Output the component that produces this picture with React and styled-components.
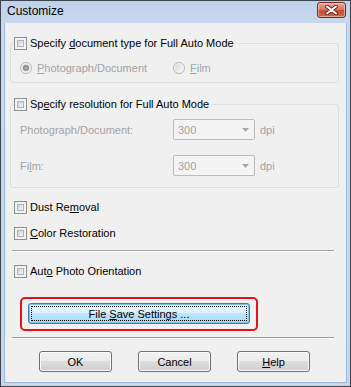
import styled, { createGlobalStyle } from "styled-components";

const GlobalStyle = createGlobalStyle`
  html, body {
    margin: 0;
    padding: 0;
    background: #ffffff;
  }
  body {
    font-family: "Liberation Sans", Arial, sans-serif;
    font-size: 11px;
    color: #000;
  }
`;

const Window = styled.div`
  width: 351px;
  height: 387px;
  box-sizing: border-box;
  border: 1px solid #3d4650;
  background: linear-gradient(#bfd1ea, #cbdaee 30px, #c6d7ec);
  display: flex;
  flex-direction: column;
`;

const TitleBar = styled.div`
  height: 22px;
  display: flex;
  align-items: center;
  justify-content: space-between;
  padding: 0 4px 0 6px;
  flex-shrink: 0;
`;

const Title = styled.span`
  font-size: 12px;
  color: #000;
  padding-bottom: 3px;
`;

const CloseButton = styled.div`
  width: 27px;
  height: 14px;
  margin-top: -5px;
  border: 1px solid #6e2a20;
  border-radius: 3px;
  background: linear-gradient(#e9a595, #d67a66 45%, #c54a33 55%, #d06a52);
  box-shadow: inset 0 0 0 1px rgba(255, 220, 210, 0.55);
  display: flex;
  align-items: center;
  justify-content: center;
`;

const Content = styled.div`
  flex: 1;
  margin: 0 3px 3px 3px;
  background: #f0f0f0;
  border: 1px solid #9fb9da;
  border-top: none;
  padding-top: 14px;
  display: flex;
  flex-direction: column;
`;

const Group = styled.fieldset`
  margin: ${(p) => p.$top || 0}px 0 0 5px;
  padding: 0;
  width: 329px;
  box-sizing: border-box;
  border: 1px solid #d5dfe5;
  border-radius: 3px;
`;

const Legend = styled.legend`
  margin-left: 3px;
  padding: 0 3px 0 0;
  height: 13px;
  display: flex;
  align-items: center;
`;

const GroupBody = styled.div`
  padding: ${(p) => p.$pad};
  display: flex;
  flex-direction: column;
  gap: ${(p) => p.$gap || 0}px;
`;

const CheckRow = styled.label`
  display: flex;
  align-items: center;
  height: 13px;
  line-height: 13px;
  gap: 3px;
  margin: ${(p) => p.$margin || "0"};
  white-space: nowrap;
`;

const Box = styled.span`
  width: 13px;
  height: 13px;
  box-sizing: border-box;
  border: 1px solid #8e8f8f;
  background: #f4f4f4;
  padding: 2px;
  display: inline-block;
  flex-shrink: 0;
`;

const BoxInner = styled.span`
  display: block;
  width: 100%;
  height: 100%;
  box-sizing: border-box;
  border: 1px solid #aeb3b9;
  background: linear-gradient(135deg, #cbcfd5, #e6e8eb 60%, #f6f6f6);
`;

const RadioRow = styled.div`
  display: flex;
  align-items: center;
  height: 12px;
`;

const RadioItem = styled.span`
  display: flex;
  align-items: center;
  gap: 5px;
  width: ${(p) => p.$w || "auto"};
  color: #a3a3a3;
  white-space: nowrap;
`;

const FieldRow = styled.div`
  display: flex;
  align-items: center;
  height: 21px;
`;

const FieldLabel = styled.span`
  width: 153px;
  color: #a3a3a3;
`;

const Combo = styled.div`
  width: 82px;
  height: 21px;
  box-sizing: border-box;
  border: 1px solid #bcbcbc;
  border-radius: 2px;
  background: #f4f4f4;
  display: flex;
  align-items: center;
  justify-content: space-between;
  padding: 0 5px 0 4px;
  color: #a3a3a3;
`;

const Unit = styled.span`
  margin-left: 5px;
  color: #a3a3a3;
`;

const Separator = styled.div`
  width: 322px;
  margin: ${(p) => p.$top}px 0 0 7px;
  border-top: 1px solid #a0a0a0;
  border-bottom: 1px solid #ffffff;
`;

const Highlight = styled.div`
  margin: 19px 0 0 15px;
  width: 238px;
  box-sizing: border-box;
  border: 2px solid #e5121c;
  border-radius: 5px;
  padding: 4px 6px 5px 6px;
`;

const Button = styled.div`
  width: ${(p) => p.$w}px;
  height: 21px;
  box-sizing: border-box;
  border: 1px solid ${(p) => (p.$focus ? "#3c7fb1" : "#707070")};
  border-radius: 3px;
  background: ${(p) =>
    p.$focus
      ? "linear-gradient(#eaf6fd, #d9f0fc 50%, #bee6fd 50%, #a7d9f5)"
      : "linear-gradient(#f2f2f2, #ebebeb 50%, #dddddd 50%, #cfcfcf)"};
  box-shadow: inset 0 0 0 1px ${(p) => (p.$focus ? "#7ec4ea" : "#fcfcfc")};
  display: flex;
  align-items: center;
  justify-content: center;
  position: relative;
  white-space: nowrap;

  &::after {
    content: "";
    display: ${(p) => (p.$focus ? "block" : "none")};
    position: absolute;
    inset: 2px;
    border: 1px dotted #000;
  }
`;

const ButtonBar = styled.div`
  margin: 12px 0 0 34px;
  display: flex;
  gap: 26px;
`;

const U = styled.span`
  text-decoration: underline;
  text-underline-offset: 1px;
`;

function Checkbox() {
  return (
    <Box>
      <BoxInner />
    </Box>
  );
}

function Radio({ checked }) {
  return (
    <svg width="12" height="12" viewBox="0 0 12 12">
      <defs>
        <linearGradient id="rg" x1="0" y1="0" x2="1" y2="1">
          <stop offset="0" stopColor="#d6d6d6" />
          <stop offset="1" stopColor="#f8f8f8" />
        </linearGradient>
      </defs>
      <circle cx="6" cy="6" r="5.5" fill="#f4f4f4" stroke="#b8b8b8" />
      <circle cx="6" cy="6" r="4" fill="url(#rg)" />
      {checked && (
        <>
          <circle cx="6" cy="6" r="3" fill="#8a8a8a" />
          <circle cx="6" cy="6" r="1.6" fill="#b4b4b4" />
        </>
      )}
    </svg>
  );
}

function ComboArrow() {
  return (
    <svg width="7" height="4" viewBox="0 0 7 4">
      <path d="M0 0h7L3.5 4z" fill="#a8a8a8" />
    </svg>
  );
}

export default function App() {
  return (
    <>
      <GlobalStyle />
      <Window>
        <TitleBar>
          <Title>Customize</Title>
          <CloseButton>
            <svg width="13" height="10" viewBox="0 0 13 10">
              <path
                d="M2 1.5l4.5 3.5-4.5 3.5M11 1.5l-4.5 3.5 4.5 3.5"
                fill="none"
                stroke="#5a1a10"
                strokeWidth="3.6"
                strokeLinecap="round"
              />
              <path
                d="M2 1.5l4.5 3.5-4.5 3.5M11 1.5l-4.5 3.5 4.5 3.5"
                fill="none"
                stroke="#ffffff"
                strokeWidth="2"
                strokeLinecap="round"
              />
            </svg>
          </CloseButton>
        </TitleBar>
        <Content>
          <Group>
            <Legend>
              <CheckRow>
                <Checkbox />
                <span>
                  Specify <U>d</U>ocument type for Full Auto Mode
                </span>
              </CheckRow>
            </Legend>
            <GroupBody $pad="12px 0 8px 9px">
              <RadioRow>
                <RadioItem $w="153px">
                  <Radio checked />
                  <span>
                    <U>P</U>hotograph/Document
                  </span>
                </RadioItem>
                <RadioItem>
                  <Radio />
                  <span>
                    <U>F</U>ilm
                  </span>
                </RadioItem>
              </RadioRow>
            </GroupBody>
          </Group>

          <Group $top={15}>
            <Legend>
              <CheckRow>
                <Checkbox />
                <span>
                  Sp<U>e</U>cify resolution for Full Auto Mode
                </span>
              </CheckRow>
            </Legend>
            <GroupBody $pad="8px 0 11px 9px" $gap={15}>
              <FieldRow>
                <FieldLabel>
                  Photo<U>g</U>raph/Document:
                </FieldLabel>
                <Combo>
                  <span>300</span>
                  <ComboArrow />
                </Combo>
                <Unit>dpi</Unit>
              </FieldRow>
              <FieldRow>
                <FieldLabel>
                  Fi<U>l</U>m:
                </FieldLabel>
                <Combo>
                  <span>300</span>
                  <ComboArrow />
                </Combo>
                <Unit>dpi</Unit>
              </FieldRow>
            </GroupBody>
          </Group>

          <CheckRow $margin="13px 0 0 9px">
            <Checkbox />
            <span>
              Dust Re<U>m</U>oval
            </span>
          </CheckRow>
          <CheckRow $margin="13px 0 0 9px">
            <Checkbox />
            <span>
              <U>C</U>olor Restoration
            </span>
          </CheckRow>

          <Separator $top={10} />

          <CheckRow $margin="13px 0 0 9px">
            <Checkbox />
            <span>
              Aut<U>o</U> Photo Orientation
            </span>
          </CheckRow>

          <Highlight>
            <Button $w={222} $focus>
              <span>
                File <U>S</U>ave Settings ...
              </span>
            </Button>
          </Highlight>

          <Separator $top={6} />

          <ButtonBar>
            <Button $w={73}>OK</Button>
            <Button $w={73}>Cancel</Button>
            <Button $w={73}>
              <span>
                <U>H</U>elp
              </span>
            </Button>
          </ButtonBar>
        </Content>
      </Window>
    </>
  );
}
